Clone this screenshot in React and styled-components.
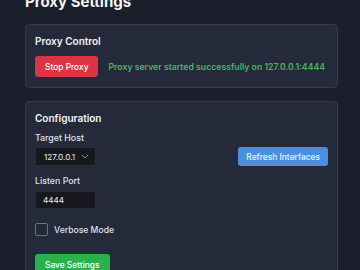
import React from "react";
import styled, { createGlobalStyle } from "styled-components";

const GlobalStyle = createGlobalStyle`
  html, body {
    margin: 0;
    padding: 0;
    background: #1b1e2b;
    overflow: hidden;
  }
  body {
    font-family: Inter, "Noto Sans", "Liberation Sans", sans-serif;
    color: #eef0f5;
  }
`;

const Page = styled.div`
  width: 313px;
  padding: 0 22px 0 25px;
  display: flex;
  flex-direction: column;
  gap: 13px;
`;

const Title = styled.h1`
  margin: -7px 0 0;
  font-size: 15px;
  line-height: 18px;
  font-weight: 700;
  color: #f3f4f8;
`;

const Card = styled.section`
  background: #252a3b;
  border: 1px solid #333a4c;
  border-radius: 4px;
  padding: 9px 9px 10px;
  display: flex;
  flex-direction: column;
`;

const CardTitle = styled.h2`
  margin: 0 0 ${(p) => p.$gap || 8}px;
  font-size: 10px;
  line-height: 14px;
  font-weight: 600;
  color: #f1f3f7;
`;

const Row = styled.div`
  display: flex;
  align-items: ${(p) => p.$align || "center"};
  justify-content: ${(p) => p.$justify || "flex-start"};
  gap: 10px;
`;

const Button = styled.button`
  flex-shrink: 0;
  height: ${(p) => p.$h || 21}px;
  padding: 0 ${(p) => p.$px || 10}px;
  border: none;
  border-radius: 3px;
  background: ${(p) => p.$bg};
  color: ${(p) => p.$color || "#fff"};
  font-family: inherit;
  font-size: 8.4px;
  font-weight: 500;
  white-space: nowrap;
  cursor: pointer;
`;

const Status = styled.span`
  font-size: 8.7px;
  font-weight: 600;
  color: #3fba5f;
  white-space: nowrap;
`;

const Field = styled.div`
  display: flex;
  flex-direction: column;
  gap: ${(p) => p.$gap || 3}px;
`;

const Label = styled.label`
  font-size: 8.8px;
  line-height: 12px;
  font-weight: 500;
  color: #dfe2ea;
`;

const Select = styled.div`
  box-sizing: border-box;
  width: 61px;
  height: 19px;
  padding: 0 6px 0 8px;
  background: #17181d;
  border: 1px solid #2b2e37;
  border-radius: 2px;
  display: flex;
  align-items: center;
  justify-content: space-between;
  font-size: 8.2px;
  color: #eceef3;
`;

const Input = styled.input`
  box-sizing: border-box;
  width: 61px;
  height: 18px;
  padding: 0 7px;
  background: #17181d;
  border: 1px solid #2b2e37;
  border-radius: 2px;
  font-family: inherit;
  font-size: 8.2px;
  color: #eceef3;
  outline: none;
`;

const CheckRow = styled.label`
  display: flex;
  align-items: center;
  gap: 6px;
  margin: 14px 0 18px;
  font-size: 8.6px;
  font-weight: 500;
  color: #dfe2ea;
`;

const Box = styled.span`
  box-sizing: border-box;
  width: 13px;
  height: 13px;
  border: 1px solid #6c7181;
  border-radius: 2px;
`;

const Chevron = () => (
  <svg width="8" height="5" viewBox="0 0 8 5" fill="none">
    <path d="M0.8 0.8 L4 4 L7.2 0.8" stroke="#9aa0ad" strokeWidth="0.9" />
  </svg>
);

export default function App() {
  return (
    <>
      <GlobalStyle />
      <Page>
        <Title>Proxy Settings</Title>
        <Card>
          <CardTitle>Proxy Control</CardTitle>
          <Row>
            <Button $bg="#dc3446" $px={10}>Stop Proxy</Button>
            <Status>Proxy server started successfully on 127.0.0.1:4444</Status>
          </Row>
        </Card>
        <Card>
          <CardTitle $gap={7}>Configuration</CardTitle>
          <Row $align="flex-end" $justify="space-between">
            <Field>
              <Label>Target Host</Label>
              <Select>
                <span>127.0.0.1</span>
                <Chevron />
              </Select>
            </Field>
            <Button $bg="#4a90e2" $h={19} $px={8} $color="#eaf2fd">
              Refresh Interfaces
            </Button>
          </Row>
          <Field $gap={4} style={{ marginTop: 9 }}>
            <Label>Listen Port</Label>
            <Input defaultValue="4444" />
          </Field>
          <CheckRow>
            <Box />
            Verbose Mode
          </CheckRow>
          <Row>
            <Button $bg="#29b24b" $px={10}>Save Settings</Button>
          </Row>
        </Card>
      </Page>
    </>
  );
}
